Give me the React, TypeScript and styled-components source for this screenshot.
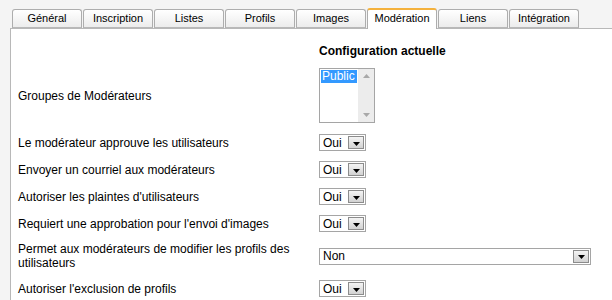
import styled, { createGlobalStyle } from "styled-components";

const GlobalStyle = createGlobalStyle`
  body {
    margin: 0;
    background: #f4f4f4;
    font-family: "Liberation Sans", Arial, sans-serif;
    color: #000;
  }
`;

const tabs = [
  "Général",
  "Inscription",
  "Listes",
  "Profils",
  "Images",
  "Modération",
  "Liens",
  "Intégration",
];

const settings: { label: string; value: string; wide?: boolean }[] = [
  { label: "Le modérateur approuve les utilisateurs", value: "Oui" },
  { label: "Envoyer un courriel aux modérateurs", value: "Oui" },
  { label: "Autoriser les plaintes d'utilisateurs", value: "Oui" },
  { label: "Requiert une approbation pour l'envoi d'images", value: "Oui" },
  {
    label: "Permet aux modérateurs de modifier les profils des utilisateurs",
    value: "Non",
    wide: true,
  },
  { label: "Autoriser l'exclusion de profils", value: "Oui" },
];

function FakeSelect({ value, wide }: { value: string; wide?: boolean }) {
  return (
    <SelectBox $wide={wide}>
      <span>{value}</span>
      <ArrowButton>
        <svg width="7" height="4" viewBox="0 0 7 4">
          <path d="M0 0h7L3.5 4z" fill="#000" />
        </svg>
      </ArrowButton>
    </SelectBox>
  );
}

export default function App() {
  return (
    <Page>
      <GlobalStyle />
      <TabBar>
        {tabs.map((t) => (
          <Tab key={t} $active={t === "Modération"}>
            {t}
          </Tab>
        ))}
      </TabBar>
      <Panel>
        <Grid>
          <Label />
          <Header>Configuration actuelle</Header>

          <Label>Groupes de Modérateurs</Label>
          <Value $tall>
            <ListBox>
              <ListItems>
                <Selected>Public</Selected>
              </ListItems>
              <ScrollTrack>
                <svg width="7" height="4" viewBox="0 0 7 4">
                  <path d="M0 4h7L3.5 0z" fill="#a8a8a8" />
                </svg>
                <svg width="7" height="4" viewBox="0 0 7 4">
                  <path d="M0 0h7L3.5 4z" fill="#a8a8a8" />
                </svg>
              </ScrollTrack>
            </ListBox>
          </Value>

          {settings.map((s) => (
            <Row key={s.label}>
              <Label>{s.label}</Label>
              <Value>
                <FakeSelect value={s.value} wide={s.wide} />
              </Value>
            </Row>
          ))}
        </Grid>
      </Panel>
    </Page>
  );
}

const Page = styled.div`
  padding: 8px 0 0 10px;
  width: 602px;
  height: 292px;
  overflow: hidden;
`;

const TabBar = styled.div`
  display: flex;
  align-items: flex-end;
  gap: 1px;
  padding-left: 2px;
  height: 20px;
  position: relative;
  z-index: 1;
`;

const Tab = styled.div<{ $active?: boolean }>`
  box-sizing: border-box;
  width: 70px;
  height: ${({ $active }) => ($active ? "21px" : "19px")};
  border: 1px solid #adadad;
  border-bottom: ${({ $active }) => ($active ? "none" : "1px solid #b8b8b8")};
  border-top: ${({ $active }) =>
    $active ? "2px solid #f4b13c" : "1px solid #adadad"};
  border-radius: 3px 3px 0 0;
  background: ${({ $active }) =>
    $active ? "#fff" : "linear-gradient(#ffffff, #ececec)"};
  font-size: 11px;
  line-height: 16px;
  text-align: center;
  color: #000;
  margin-bottom: ${({ $active }) => ($active ? "-1px" : "0")};
`;

const Panel = styled.div`
  background: #fff;
  border: 1px solid #b8b8b8;
  border-right: none;
  border-bottom: none;
  height: 300px;
`;

const Grid = styled.div`
  display: grid;
  grid-template-columns: 308px 1fr;
  align-items: center;
  font-size: 12px;
`;

const Row = styled.div`
  display: contents;
`;

const Header = styled.div`
  font-weight: bold;
  padding: 15px 0 5px;
  line-height: 14px;
`;

const Label = styled.div`
  padding: 5px 8px 5px 7px;
  line-height: 14px;
`;

const Value = styled.div<{ $tall?: boolean }>`
  display: flex;
  padding: ${({ $tall }) => ($tall ? "5px 0 6px" : "5px 0")};
`;

const ListBox = styled.div`
  box-sizing: border-box;
  width: 56px;
  height: 55px;
  border: 1px solid #a5a5a5;
  background: #fff;
  display: flex;
`;

const ListItems = styled.div`
  flex: 1;
  padding: 1px;
`;

const Selected = styled.div`
  background: #3399ff;
  color: #fff;
  line-height: 13px;
  padding-left: 1px;
`;

const ScrollTrack = styled.div`
  width: 16px;
  background: #ececec;
  display: flex;
  flex-direction: column;
  justify-content: space-between;
  align-items: center;
  padding: 5px 0;
`;

const SelectBox = styled.div<{ $wide?: boolean }>`
  box-sizing: border-box;
  width: ${({ $wide }) => ($wide ? "272px" : "47px")};
  height: 17px;
  border: 1px solid #a5a5a5;
  background: #fff;
  display: flex;
  align-items: center;
  justify-content: space-between;
  padding: 0 1px 0 3px;
  line-height: 14px;
`;

const ArrowButton = styled.div`
  box-sizing: border-box;
  width: 16px;
  height: 13px;
  border: 1px solid #8c8c8c;
  background: linear-gradient(#f4f4f4, #d2d2d2);
  display: flex;
  align-items: center;
  justify-content: center;
  padding-top: 2px;
`;
